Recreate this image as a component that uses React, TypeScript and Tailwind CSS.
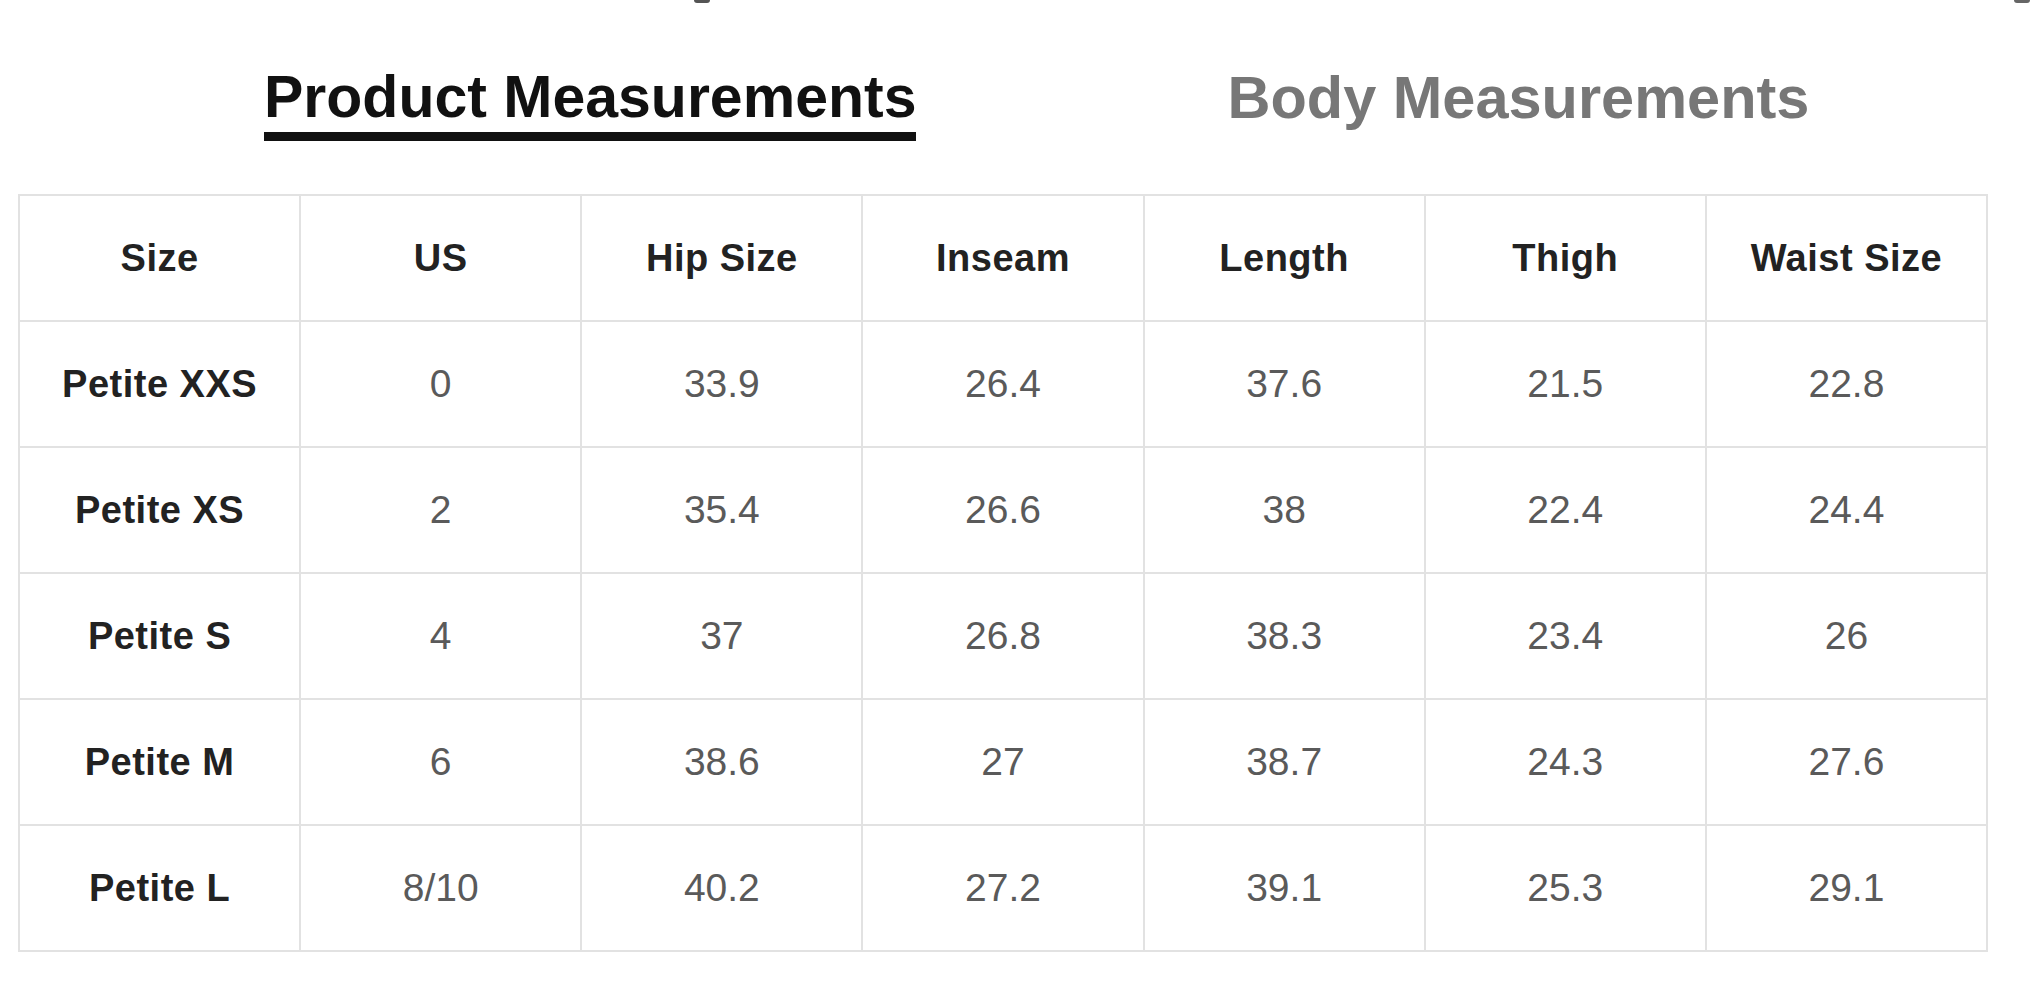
const headers = ["Size", "US", "Hip Size", "Inseam", "Length", "Thigh", "Waist Size"];

const rows: string[][] = [
  ["Petite XXS", "0", "33.9", "26.4", "37.6", "21.5", "22.8"],
  ["Petite XS", "2", "35.4", "26.6", "38", "22.4", "24.4"],
  ["Petite S", "4", "37", "26.8", "38.3", "23.4", "26"],
  ["Petite M", "6", "38.6", "27", "38.7", "24.3", "27.6"],
  ["Petite L", "8/10", "40.2", "27.2", "39.1", "25.3", "29.1"],
];

export default function App() {
  return (
    <div className="h-[1000px] w-[2033px] overflow-hidden bg-white font-['Liberation_Sans',Arial,sans-serif]">
      {/* descenders of the cut-off line above */}
      <div className="flex h-[4px]">
        <span className="ml-[694px] h-[3px] w-[16px] rounded-b-full bg-[#555]" />
        <span className="ml-[1304px] h-[3px] w-[16px] rounded-b-full bg-[#666]" />
      </div>

      <div className="flex gap-[311px] pl-[264px] pt-[64px]">
        <div className="flex flex-col">
          <span className="text-[59px] font-bold leading-none text-[#111]">Product Measurements</span>
          <span className="mt-[5px] h-[9px] w-full bg-[#111]" />
        </div>
        <span className="text-[59.5px] font-bold leading-none text-[#777]">Body Measurements</span>
      </div>

      <div className="ml-[18px] mt-[53px] w-[1970px]">
        <table className="w-full table-fixed border-collapse border-2 border-[#e2e2e2]">
          <thead>
            <tr className="h-[126px]">
              {headers.map((h) => (
                <th
                  key={h}
                  className="border-2 border-[#e2e2e2] text-center text-[38px] font-bold tracking-[0.5px] text-[#222]"
                >
                  {h}
                </th>
              ))}
            </tr>
          </thead>
          <tbody>
            {rows.map((r) => (
              <tr key={r[0]} className="h-[126px]">
                {r.map((c, i) => (
                  <td
                    key={i}
                    className={
                      i === 0
                        ? "border-2 border-[#e2e2e2] text-center text-[38px] font-bold tracking-[0.5px] text-[#222]"
                        : "border-2 border-[#e2e2e2] text-center text-[39px] text-[#5a5a5a]"
                    }
                  >
                    {c}
                  </td>
                ))}
              </tr>
            ))}
          </tbody>
        </table>
      </div>
    </div>
  );
}
